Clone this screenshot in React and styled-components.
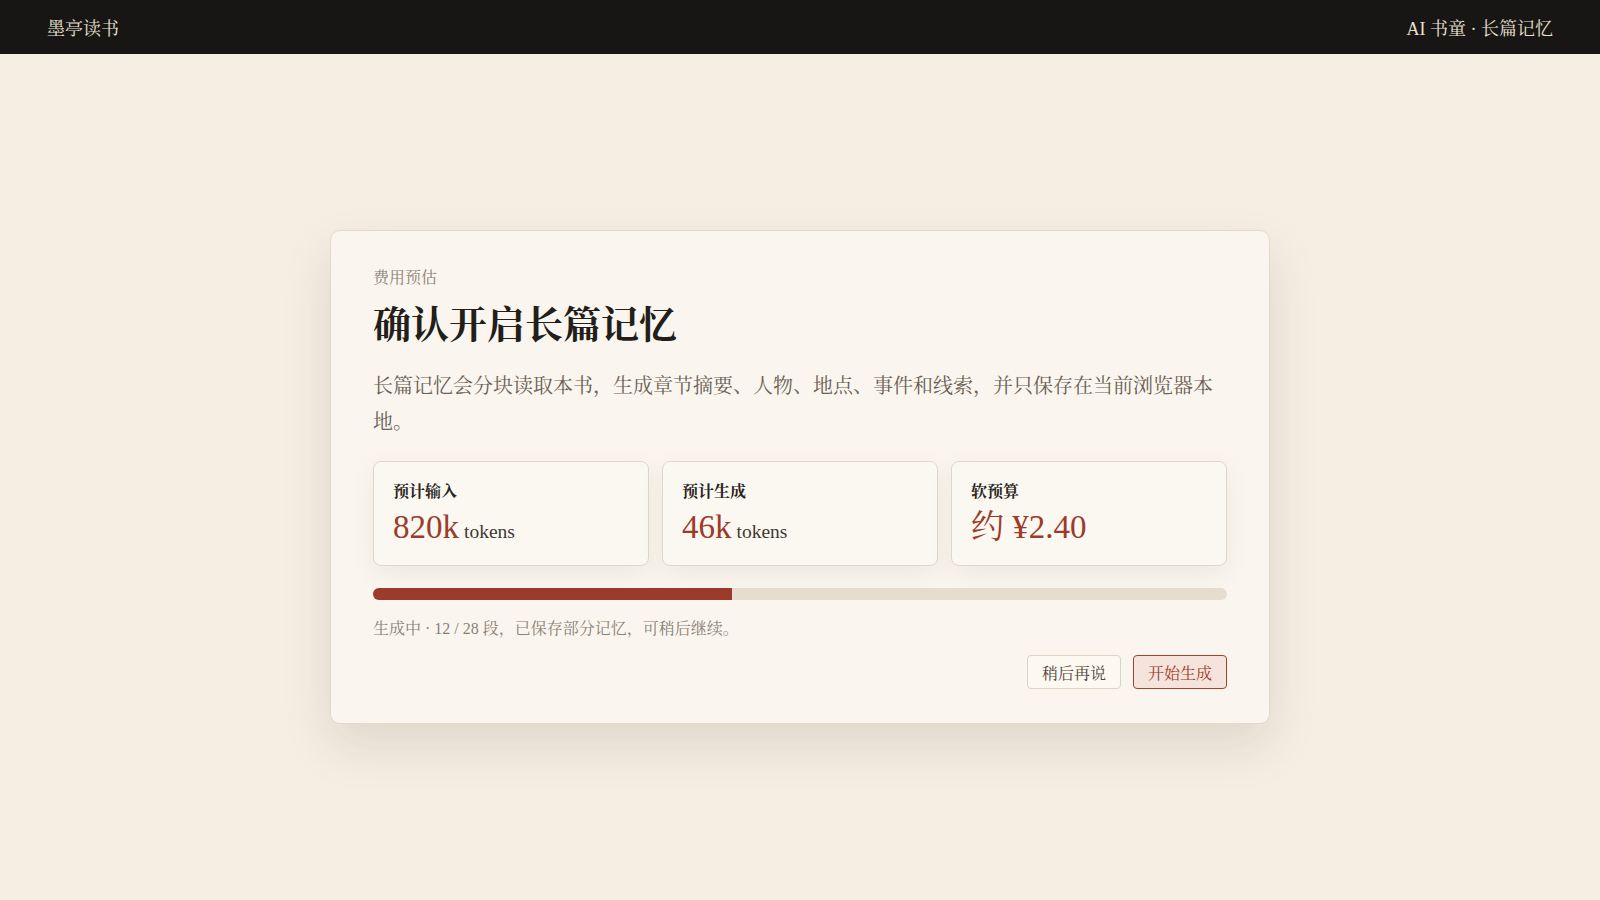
import React from 'react';
import styled, { createGlobalStyle } from 'styled-components';

const GlobalStyle = createGlobalStyle`
  html, body {
    margin: 0;
    padding: 0;
    background: #f5eee3;
  }
  body {
    font-family: "Liberation Serif", "Noto Serif CJK SC", "Noto Sans CJK SC", serif;
    color: #2a2520;
  }
  * { box-sizing: border-box; }
`;

const Page = styled.div`
  min-height: 100vh;
  display: flex;
  flex-direction: column;
`;

const TopBar = styled.header`
  height: 54px;
  flex-shrink: 0;
  background: #171614;
  color: #e9e0d2;
  display: flex;
  align-items: center;
  justify-content: space-between;
  padding: 0 47px;
  font-size: 18px;
`;

const Main = styled.main`
  flex: 1;
  display: flex;
  align-items: center;
  justify-content: center;
`;

const Card = styled.section`
  width: 940px;
  background: #faf6ef;
  border: 1px solid #e4d9c8;
  border-radius: 10px;
  padding: 35px 42px 34px;
  box-shadow: 0 22px 50px rgba(70, 50, 25, 0.12);
`;

const Eyebrow = styled.div`
  font-size: 16px;
  line-height: 24px;
  color: #8b8076;
`;

const Title = styled.h1`
  margin: 11px 0 0;
  font-size: 38px;
  line-height: 49px;
  font-weight: 700;
  color: #221e1a;
`;

const Desc = styled.p`
  margin: 18px 0 0;
  font-size: 20px;
  line-height: 36px;
  color: #6a5f55;
`;

const Stats = styled.div`
  margin-top: 21px;
  display: grid;
  grid-template-columns: repeat(3, 1fr);
  gap: 13px;
`;

const Stat = styled.div`
  background: #fbf8f2;
  border: 1px solid #e2d7c6;
  border-radius: 8px;
  padding: 19px 19px 19px;
  box-shadow: 0 8px 24px rgba(70, 50, 25, 0.07);
`;

const StatLabel = styled.div`
  font-size: 16px;
  line-height: 22px;
  font-weight: 700;
  color: #2a2520;
`;

const StatValue = styled.div`
  margin-top: 5px;
  height: 38px;
  font-size: 33px;
  line-height: 38px;
  color: #9c3b2b;
  white-space: nowrap;
`;

const Unit = styled.span`
  font-size: 19.5px;
  line-height: 1;
  color: #3f3933;
  margin-left: 5px;
`;

const Track = styled.div`
  margin-top: 22px;
  height: 12px;
  border-radius: 6px;
  background: #e6ddd0;
  overflow: hidden;
`;

const Fill = styled.div`
  height: 100%;
  background: #9c3b2b;
`;

const Status = styled.div`
  margin-top: 17px;
  font-size: 16px;
  line-height: 24px;
  color: #8b8076;
`;

const Actions = styled.div`
  margin-top: 14px;
  display: flex;
  justify-content: flex-end;
  gap: 12px;
`;

const Button = styled.button`
  height: 34px;
  padding: 0 14px;
  font-family: inherit;
  font-size: 16px;
  border-radius: 4px;
  cursor: pointer;
  border: 1px solid ${p => (p.$primary ? '#a9402f' : '#ddd3c2')};
  background: ${p => (p.$primary ? '#f5e4dc' : '#fdf9f1')};
  color: ${p => (p.$primary ? '#9c3b2b' : '#4e453e')};
`;

const stats = [
  { label: '预计输入', value: '820k', unit: 'tokens' },
  { label: '预计生成', value: '46k', unit: 'tokens' },
  { label: '软预算', value: '约 ¥2.40' },
];

export default function App() {
  const done = 12;
  const total = 28;
  const pct = Math.floor((done / total) * 100);
  return (
    <Page>
      <GlobalStyle />
      <TopBar>
        <span>墨亭读书</span>
        <span>AI 书童 · 长篇记忆</span>
      </TopBar>
      <Main>
        <Card>
          <Eyebrow>费用预估</Eyebrow>
          <Title>确认开启长篇记忆</Title>
          <Desc>
            长篇记忆会分块读取本书，生成章节摘要、人物、地点、事件和线索，并只保存在当前浏览器本地。
          </Desc>
          <Stats>
            {stats.map(s => (
              <Stat key={s.label}>
                <StatLabel>{s.label}</StatLabel>
                <StatValue>
                  {s.value}
                  {s.unit && <Unit>{s.unit}</Unit>}
                </StatValue>
              </Stat>
            ))}
          </Stats>
          <Track>
            <Fill style={{ width: `${pct}%` }} />
          </Track>
          <Status>生成中 · {done} / {total} 段，已保存部分记忆，可稍后继续。</Status>
          <Actions>
            <Button>稍后再说</Button>
            <Button $primary>开始生成</Button>
          </Actions>
        </Card>
      </Main>
    </Page>
  );
}
